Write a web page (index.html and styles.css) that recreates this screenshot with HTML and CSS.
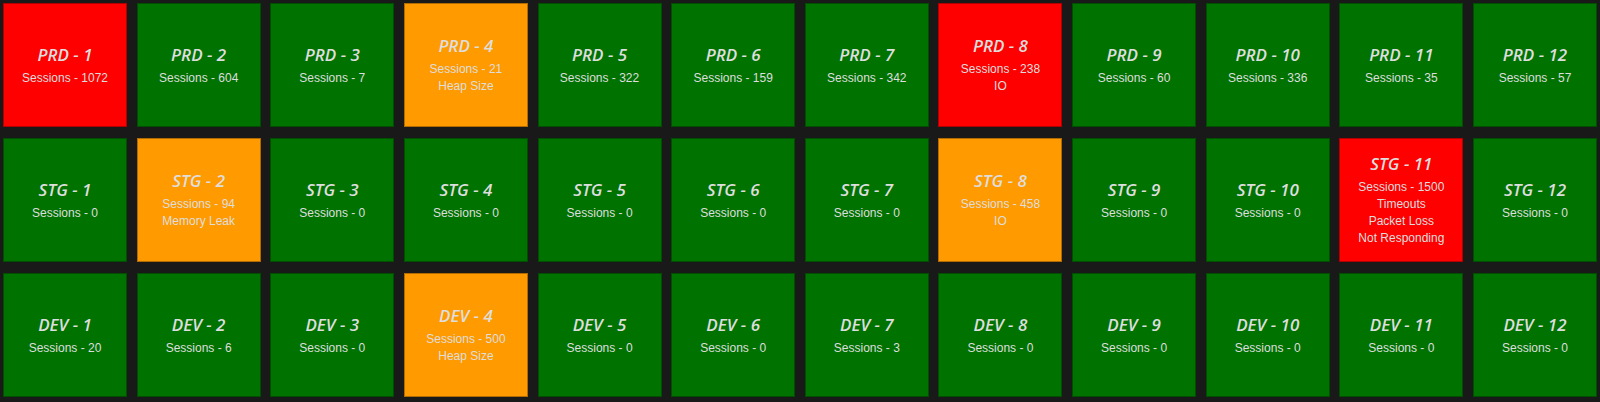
FILE: index.html
```html
<!DOCTYPE html>
<html>
<head>
<meta charset="utf-8">
<link rel="stylesheet" href="styles.css">
</head>
<body>
<div class="board">
  <div class="tile red"><div class="name">PRD - 1</div><div class="info">Sessions - 1072</div></div>
  <div class="tile green"><div class="name">PRD - 2</div><div class="info">Sessions - 604</div></div>
  <div class="tile green"><div class="name">PRD - 3</div><div class="info">Sessions - 7</div></div>
  <div class="tile orange"><div class="name">PRD - 4</div><div class="info">Sessions - 21</div><div class="info">Heap Size</div></div>
  <div class="tile green"><div class="name">PRD - 5</div><div class="info">Sessions - 322</div></div>
  <div class="tile green"><div class="name">PRD - 6</div><div class="info">Sessions - 159</div></div>
  <div class="tile green"><div class="name">PRD - 7</div><div class="info">Sessions - 342</div></div>
  <div class="tile red"><div class="name">PRD - 8</div><div class="info">Sessions - 238</div><div class="info">IO</div></div>
  <div class="tile green"><div class="name">PRD - 9</div><div class="info">Sessions - 60</div></div>
  <div class="tile green"><div class="name">PRD - 10</div><div class="info">Sessions - 336</div></div>
  <div class="tile green"><div class="name">PRD - 11</div><div class="info">Sessions - 35</div></div>
  <div class="tile green"><div class="name">PRD - 12</div><div class="info">Sessions - 57</div></div>

  <div class="tile green"><div class="name">STG - 1</div><div class="info">Sessions - 0</div></div>
  <div class="tile orange"><div class="name">STG - 2</div><div class="info">Sessions - 94</div><div class="info">Memory Leak</div></div>
  <div class="tile green"><div class="name">STG - 3</div><div class="info">Sessions - 0</div></div>
  <div class="tile green"><div class="name">STG - 4</div><div class="info">Sessions - 0</div></div>
  <div class="tile green"><div class="name">STG - 5</div><div class="info">Sessions - 0</div></div>
  <div class="tile green"><div class="name">STG - 6</div><div class="info">Sessions - 0</div></div>
  <div class="tile green"><div class="name">STG - 7</div><div class="info">Sessions - 0</div></div>
  <div class="tile orange"><div class="name">STG - 8</div><div class="info">Sessions - 458</div><div class="info">IO</div></div>
  <div class="tile green"><div class="name">STG - 9</div><div class="info">Sessions - 0</div></div>
  <div class="tile green"><div class="name">STG - 10</div><div class="info">Sessions - 0</div></div>
  <div class="tile red"><div class="name">STG - 11</div><div class="info">Sessions - 1500</div><div class="info">Timeouts</div><div class="info">Packet Loss</div><div class="info">Not Responding</div></div>
  <div class="tile green"><div class="name">STG - 12</div><div class="info">Sessions - 0</div></div>

  <div class="tile green"><div class="name">DEV - 1</div><div class="info">Sessions - 20</div></div>
  <div class="tile green"><div class="name">DEV - 2</div><div class="info">Sessions - 6</div></div>
  <div class="tile green"><div class="name">DEV - 3</div><div class="info">Sessions - 0</div></div>
  <div class="tile orange"><div class="name">DEV - 4</div><div class="info">Sessions - 500</div><div class="info">Heap Size</div></div>
  <div class="tile green"><div class="name">DEV - 5</div><div class="info">Sessions - 0</div></div>
  <div class="tile green"><div class="name">DEV - 6</div><div class="info">Sessions - 0</div></div>
  <div class="tile green"><div class="name">DEV - 7</div><div class="info">Sessions - 3</div></div>
  <div class="tile green"><div class="name">DEV - 8</div><div class="info">Sessions - 0</div></div>
  <div class="tile green"><div class="name">DEV - 9</div><div class="info">Sessions - 0</div></div>
  <div class="tile green"><div class="name">DEV - 10</div><div class="info">Sessions - 0</div></div>
  <div class="tile green"><div class="name">DEV - 11</div><div class="info">Sessions - 0</div></div>
  <div class="tile green"><div class="name">DEV - 12</div><div class="info">Sessions - 0</div></div>
</div>
</body>
</html>
```

FILE: styles.css
```css
html, body {
  margin: 0;
  padding: 0;
  background: #191919;
  height: 402px;
  overflow: hidden;
}
.board {
  display: grid;
  grid-template-columns: repeat(12, 1fr);
  grid-auto-rows: 124px;
  column-gap: 9.6px;
  row-gap: 11px;
  padding: 3px 3px 0 3px;
}
.tile {
  display: flex;
  flex-direction: column;
  align-items: center;
  justify-content: center;
  box-shadow: inset 0 0 0 1px rgba(0,0,0,0.3);
  color: #dedede;
  text-align: center;
}
.green { background: #007200; }
.red { background: #ff0000; }
.orange { background: #ff9a00; }
.name {
  font-family: "Open Sans", sans-serif;
  font-style: italic;
  font-weight: 600;
  font-size: 17px;
  line-height: 22px;
  margin-bottom: 4px;
}
.info {
  font-family: "Liberation Sans", Arial, sans-serif;
  font-size: 12px;
  line-height: 17px;
}
```
